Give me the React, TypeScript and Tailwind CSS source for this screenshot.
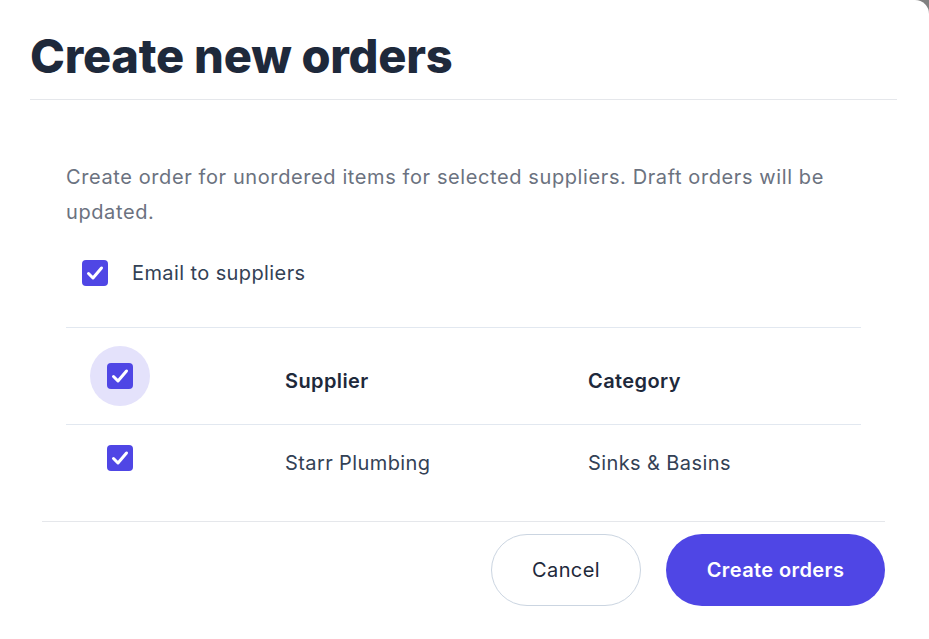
import React from "react";

const CheckBox = () => (
  <span className="flex h-[26px] w-[26px] items-center justify-center rounded-[4px] bg-[#4f46e5]">
    <svg viewBox="0 0 26 26" className="h-[26px] w-[26px]" fill="none" stroke="white" strokeWidth="3" strokeLinecap="round" strokeLinejoin="round">
      <path d="M6.5 13.5l4.5 4.5 8.5-10" />
    </svg>
  </span>
);

const rows = [{ supplier: "Starr Plumbing", category: "Sinks & Basins" }];

export default function App() {
  return (
    <div className="h-[639px] w-full overflow-hidden bg-[#808080] font-['Inter',sans-serif]">
      <div className="flex h-full flex-col rounded-tr-[14px] bg-white">
        <div className="ml-[30px] mr-[32px] border-b border-[#e5e7eb] pb-[17px] pt-[30px]">
          <h1 className="text-[47px] font-extrabold leading-[52px] tracking-[-0.005em] text-[#1e293b]">
            Create new orders
          </h1>
        </div>

        <div className="ml-[66px] mr-[68px] mt-[60px]">
          <p className="text-[20px] leading-[35px] tracking-[0.03em] text-[#6b7280]">
            Create order for unordered items for selected suppliers. Draft orders will be updated.
          </p>

          <label className="ml-4 mt-[29px] flex items-center gap-[24px]">
            <CheckBox />
            <span className="text-[20px] leading-[28px] tracking-[0.02em] text-[#334155]">Email to suppliers</span>
          </label>

          <div className="mt-10 border-t border-[#e2e8f0]">
            <div className="grid h-[97px] grid-cols-[219px_303px_1fr] items-center border-b border-[#e2e8f0]">
              <div className="pl-6">
                <span className="flex h-[60px] w-[60px] items-center justify-center rounded-full bg-[#e4e2fb]">
                  <CheckBox />
                </span>
              </div>
              <div className="pt-[9px] text-[20px] font-semibold tracking-[0.02em] text-[#1e293b]">Supplier</div>
              <div className="pt-[9px] text-[20px] font-semibold tracking-[0.02em] text-[#1e293b]">Category</div>
            </div>
            {rows.map((row) => (
              <div key={row.supplier} className="grid h-[76px] grid-cols-[219px_303px_1fr] items-start">
                <div className="pl-[41px] pt-[20px]">
                  <CheckBox />
                </div>
                <div className="pt-[24px] text-[20px] leading-[28px] tracking-[0.02em] text-[#334155]">{row.supplier}</div>
                <div className="pt-[24px] text-[20px] leading-[28px] tracking-[0.02em] text-[#334155]">{row.category}</div>
              </div>
            ))}
          </div>
        </div>

        <div className="ml-[42px] mr-[44px] mt-[20px] flex justify-end gap-[25px] border-t border-[#e5e7eb] pt-[12px]">
          <button className="h-[72px] w-[150px] rounded-full border border-[#cbd5e1] bg-white text-[20px] tracking-[0.02em] text-[#1e293b]">
            Cancel
          </button>
          <button className="h-[72px] w-[219px] rounded-full bg-[#4f46e5] text-[20px] font-semibold tracking-[0.02em] text-white">
            Create orders
          </button>
        </div>
      </div>
    </div>
  );
}
